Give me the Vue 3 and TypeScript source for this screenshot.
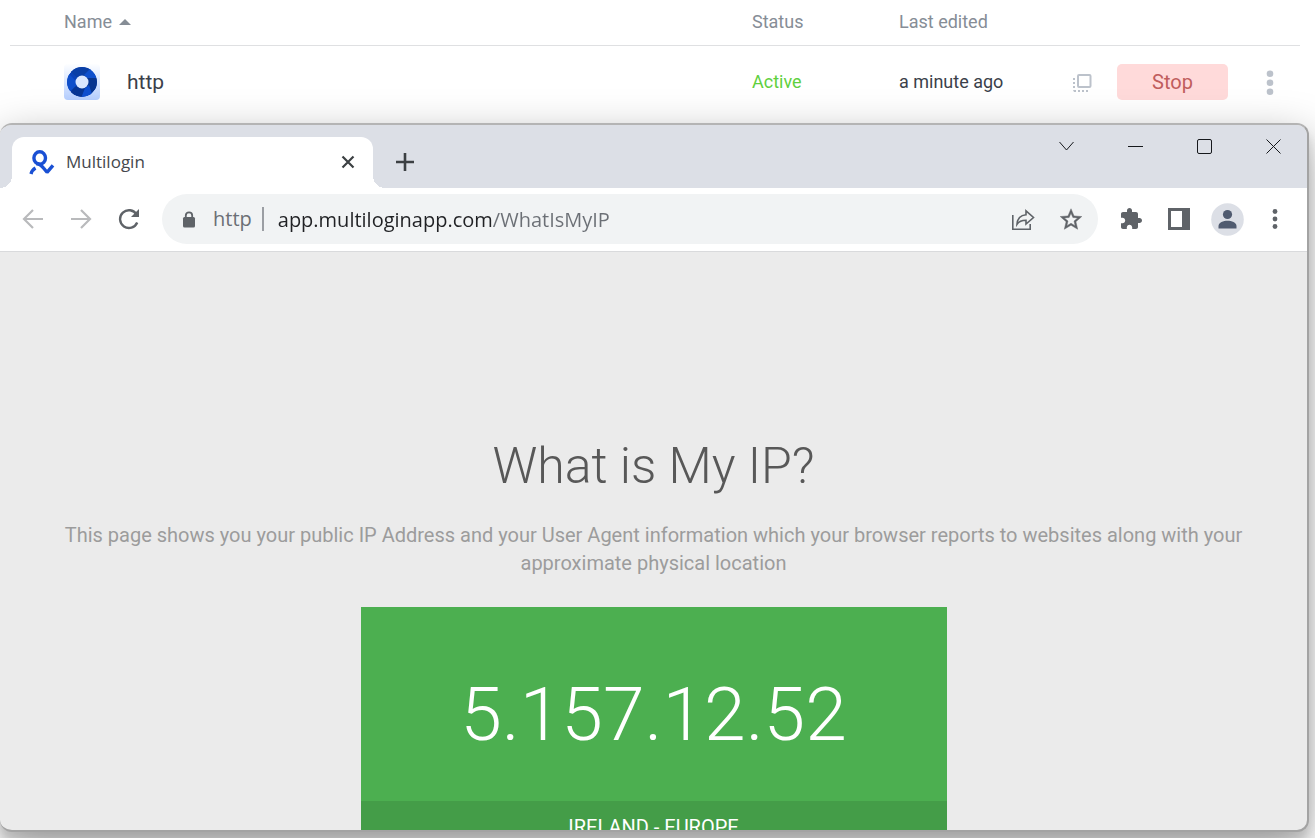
<script setup lang="ts">
import { ref } from 'vue'

interface Profile {
  name: string
  status: string
  edited: string
}

const profiles: Profile[] = [{ name: 'http', status: 'Active', edited: 'a minute ago' }]
const address = ref('app.multiloginapp.com/WhatIsMyIP')
</script>

<template>
  <div class="desktop">
    <table class="profiles">
      <thead>
        <tr>
          <th class="col-name" scope="col">
            <button class="sort" type="button">
              Name
              <svg width="12" height="6" viewBox="0 0 12 6" aria-hidden="true"><path d="M0 6 6 0l6 6z" fill="#868d96" /></svg>
            </button>
          </th>
          <th class="col-status" scope="col">Status</th>
          <th class="col-edited" scope="col">Last edited</th>
          <th class="col-actions" scope="col" aria-label="Actions"></th>
        </tr>
      </thead>
      <tbody>
        <tr v-for="p in profiles" :key="p.name">
          <td class="col-name">
            <div class="profile">
              <svg class="avatar" width="36" height="36" viewBox="0 0 36 36" aria-hidden="true">
                <defs>
                  <linearGradient id="tile" x1="0" y1="0" x2="0" y2="1">
                    <stop offset="0" stop-color="#fdfeff" />
                    <stop offset="1" stop-color="#b5ceff" />
                  </linearGradient>
                  <clipPath id="disc"><circle cx="18" cy="16" r="15" /></clipPath>
                </defs>
                <rect width="36" height="36" rx="4" fill="url(#tile)" />
                <g transform="translate(0 2)">
                  <g clip-path="url(#disc)">
                    <circle cx="18" cy="16" r="15" fill="#0b43b8" />
                    <path d="M18 16 5 4 13 0l15 2-7 8z" fill="#0a3fa6" />
                    <path d="M20 9 27 2l7 10-10 0z" fill="#0f50cd" />
                    <path d="M23 12h11v8l-8 9-5-8z" fill="#08358f" />
                    <path d="M25 19 28 28l-11 5 3-10z" fill="#0e4fd0" />
                    <path d="M21 22 17 32 6 27l5-7z" fill="#083695" />
                    <path d="M12 20 5 26 1 14 5 8l7 7z" fill="#0f4fca" />
                  </g>
                  <circle cx="18" cy="16" r="6.500" fill="#dce8ff" />
                </g>
              </svg>
              <span>{{ p.name }}</span>
            </div>
          </td>
          <td class="col-status active">{{ p.status }}</td>
          <td class="col-edited">{{ p.edited }}</td>
          <td class="col-actions">
            <div class="actions">
              <button class="icon-btn" type="button" aria-label="Bring to front">
                <svg width="20" height="20" viewBox="0 0 20 20" fill="#bcc2cb">
                  <rect x="6" y="3" width="12.500" height="12" rx="1" fill="none" stroke="#bcc2cb" stroke-width="2" />
                  <path d="M1 6h2v2H1zM1 10h2v2H1zM1 14h2v2H1zM1 18h3v2H2zM6 18h2v2H6zM10 18h2v2h-2zM14 18h2v2h-2z" />
                </svg>
              </button>
              <button class="stop" type="button">Stop</button>
              <button class="icon-btn" type="button" aria-label="More">
                <svg width="8" height="26" viewBox="0 0 8 26" fill="#bcc2cb">
                  <circle cx="4" cy="4.700" r="3.300" /><circle cx="4" cy="13.700" r="3.300" /><circle cx="4" cy="22.700" r="3.300" />
                </svg>
              </button>
            </div>
          </td>
        </tr>
      </tbody>
    </table>

    <section class="browser" aria-label="Multilogin browser">
      <div class="strip">
        <div class="tab">
          <svg class="favicon" width="26" height="26" viewBox="0 0 26 26" fill="none" stroke="#1a50d4" stroke-width="3.400" aria-hidden="true">
            <ellipse cx="10.700" cy="9" rx="5.800" ry="6.300" />
            <path d="M7 14.500q4 0 7.500 4.500l3.500 4.300 6-7" stroke-linejoin="bevel" />
            <path d="M2 25Q3 21 6.500 19" />
          </svg>
          <span class="title">Multilogin</span>
          <button class="close-tab" type="button" aria-label="Close tab">
            <svg width="14" height="14" viewBox="0 0 14 14" stroke="#3c4043" stroke-width="2.200"><path d="m1.500 1.500 11 11m0-11-11 11" /></svg>
          </button>
        </div>
        <button class="new-tab" type="button" aria-label="New tab">
          <svg width="18" height="18" viewBox="0 0 18 18" stroke="#3c4043" stroke-width="2.600"><path d="M9 0v18M0 9h18" /></svg>
        </button>
        <div class="controls">
          <button type="button" aria-label="Search tabs">
            <svg width="16" height="16" viewBox="0 0 16 16"><path d="m1.500 4 7 8 7-8" /></svg>
          </button>
          <button type="button" aria-label="Minimize">
            <svg width="16" height="16" viewBox="0 0 16 16"><path d="M1 8.500h15" /></svg>
          </button>
          <button type="button" aria-label="Maximize">
            <svg width="16" height="16" viewBox="0 0 16 16"><rect x="1.500" y="1.500" width="14" height="14" rx="1.500" /></svg>
          </button>
          <button type="button" aria-label="Close">
            <svg width="16" height="16" viewBox="0 0 16 16"><path d="m1.500 1.500 14 14m0-14-14 14" /></svg>
          </button>
        </div>
      </div>

      <div class="toolbar">
        <button class="tool" type="button" aria-label="Back">
          <svg width="22" height="20" viewBox="0 0 22 20" fill="none" stroke="#b9babc" stroke-width="2.200"><path d="M21 10H2.500M11 1 2 10l9 9" /></svg>
        </button>
        <button class="tool" type="button" aria-label="Forward">
          <svg width="22" height="20" viewBox="0 0 22 20" fill="none" stroke="#b9babc" stroke-width="2.200"><path d="M1 10h18.500M11 1l9 9-9 9" /></svg>
        </button>
        <button class="tool" type="button" aria-label="Reload">
          <svg width="22" height="22" viewBox="0 0 22 22" fill="none">
            <path d="M18.600 6.500A8.900 8.900 0 1 0 19.200 14.500" stroke="#5f6368" stroke-width="2.400" />
            <path d="M21 1v8h-8z" fill="#5f6368" />
          </svg>
        </button>
        <form class="omnibox" @submit.prevent>
          <svg class="lock" width="18" height="18" viewBox="0 0 18 18" aria-hidden="true">
            <rect x="3" y="7" width="12" height="10.500" rx="1.500" fill="#5f6368" />
            <path d="M5.800 8V5.500a3.200 3.200 0 0 1 6.400 0V8" fill="none" stroke="#5f6368" stroke-width="1.800" />
          </svg>
          <span class="chip">http</span>
          <input v-model="address" class="url" type="text" aria-label="Address" spellcheck="false" />
          <button class="tool" type="button" aria-label="Share">
            <svg width="24" height="24" viewBox="0 0 24 24" fill="none" stroke="#5f6368" stroke-width="1.600">
              <path d="M1.800 8v14.200h17.400V17" />
              <path d="M15 3.800 22.500 10.500 15 17v-3.800c-4.500 0-7 1-9 4 .4-5.500 3.500-9 9-9.500z" />
            </svg>
          </button>
          <button class="tool" type="button" aria-label="Bookmark">
            <svg width="26" height="26" viewBox="0 0 24 24" fill="#5f6368" stroke="#5f6368" stroke-width=".4"><path d="m22 9.740-7.190-.62L12 2.500 9.190 9.130 2 9.740l5.460 4.730L5.820 21.500 12 17.770l6.180 3.730-1.630-7.030L22 9.740zM12 15.900l-3.760 2.270 1-4.280-3.320-2.880 4.380-.38L12 6.600l1.710 4.040 4.380.38-3.320 2.880 1 4.280L12 15.900z" /></svg>
          </button>
        </form>
        <button class="tool" type="button" aria-label="Extensions">
          <svg width="24" height="24" viewBox="0 0 24 24" fill="#5f6368"><path d="M20.500 11H19V7c0-1.100-.9-2-2-2h-4V3.500C13 2.120 11.880 1 10.500 1S8 2.120 8 3.500V5H4c-1.100 0-1.990.9-1.990 2v3.800H3.500c1.490 0 2.700 1.210 2.700 2.700s-1.210 2.700-2.700 2.700H2V20c0 1.100.9 2 2 2h3.800v-1.500c0-1.490 1.210-2.700 2.700-2.700s2.700 1.210 2.700 2.700V22H17c1.100 0 2-.9 2-2v-4h1.500c1.380 0 2.500-1.120 2.500-2.500S21.880 11 20.500 11z" /></svg>
        </button>
        <button class="tool" type="button" aria-label="Side panel">
          <svg width="22" height="22" viewBox="0 0 22 22"><path d="M0 0h22v22H0zM3 3v16h11V3z" fill="#5f6368" fill-rule="evenodd" /></svg>
        </button>
        <button class="tool" type="button" aria-label="Profile">
          <svg width="34" height="34" viewBox="0 0 34 34">
            <circle cx="17.500" cy="17.500" r="16.300" fill="#dcdfe6" />
            <circle cx="17.500" cy="12.500" r="4.600" fill="#505b70" />
            <path d="M8.500 26.500V24c0-3.500 5-5.300 9-5.300s9 1.800 9 5.300v2.500z" fill="#505b70" />
          </svg>
        </button>
        <button class="tool" type="button" aria-label="Menu">
          <svg width="6" height="20" viewBox="0 0 6 20" fill="#5f6368"><circle cx="3" cy="2.500" r="2.400" /><circle cx="3" cy="10" r="2.400" /><circle cx="3" cy="17.500" r="2.400" /></svg>
        </button>
      </div>

      <main class="page">
        <h1>What is My IP?</h1>
        <p class="lead">
          This page shows you your public IP Address and your User Agent information which your browser reports to
          websites along with your approximate physical location
        </p>
        <div class="card">
          <div class="ip">5.157.12.52</div>
          <div class="place">IRELAND - EUROPE</div>
        </div>
      </main>
    </section>
  </div>
</template>

<style>
body {
  margin: 0;
}
</style>

<style scoped>
.desktop {
  box-sizing: border-box;
  height: 100vh;
  padding: 0 6px 6px 0;
  display: flex;
  flex-direction: column;
  overflow: hidden;
  background: #fff;
  font-family: Roboto, "Liberation Sans", sans-serif;
}

button {
  margin: 0;
  padding: 0;
  border: 0;
  background: none;
  font: inherit;
  color: inherit;
  display: inline-flex;
  align-items: center;
  justify-content: center;
  flex: none;
}

svg {
  display: block;
  flex: none;
}

.profiles {
  table-layout: fixed;
  border-collapse: separate;
  border-spacing: 0;
  width: calc(100% - 19px);
  margin: 0 0 5px 10px;
  font-size: 18px;
  line-height: 24px;
}

th,
td {
  padding: 0;
  text-align: left;
}

th {
  height: 43px;
  padding-bottom: 2px;
  border-bottom: 1px solid #dfe0e2;
  font-weight: 400;
  color: #868d96;
}

td {
  height: 72px;
  color: #3b3f4a;
}

.col-name {
  padding-left: 54px;
}

.col-status {
  width: 147px;
}

.col-edited {
  width: 173px;
}

.col-actions {
  width: 228px;
}

td.active {
  color: #5fd03e;
}

.sort {
  gap: 7px;
}

.profile {
  display: flex;
  align-items: center;
  gap: 27px;
  font-size: 21px;
}

.actions {
  display: flex;
  align-items: center;
}

.icon-btn {
  width: 20px;
}

.stop {
  width: 111px;
  height: 36px;
  margin: 0 32px 0 25px;
  border-radius: 5px;
  background: #ffdada;
  color: #c05d5d;
  font-size: 20px;
}

.browser {
  flex: 1;
  min-height: 0;
  display: flex;
  flex-direction: column;
  overflow: hidden;
  border: 2px solid #a3a3a3;
  border-top-color: #b4b4b4;
  border-left: 0;
  border-radius: 12px;
  background: #ebebeb;
  box-shadow: 0 14px 44px rgba(0, 0, 0, 0.34), 0 10px 10px rgba(0, 0, 0, 0.12);
}

.strip {
  display: flex;
  height: 63px;
  flex: none;
  background: #dcdfe6;
}

.tab {
  position: relative;
  box-sizing: border-box;
  display: flex;
  align-items: center;
  width: 361px;
  margin: 12px 0 0 12px;
  padding: 0 14px 2px 17px;
  border-radius: 12px 12px 0 0;
  background: #fff;
  color: #45484d;
  font-family: "Open Sans", "Noto Sans", sans-serif;
  font-size: 17px;
}

.tab::before,
.tab::after {
  content: "";
  position: absolute;
  bottom: 0;
  width: 12px;
  height: 12px;
}

.tab::before {
  right: 100%;
  background: radial-gradient(circle at 0 0, transparent 12px, #fff 12px);
}

.tab::after {
  left: 100%;
  background: radial-gradient(circle at 100% 0, transparent 12px, #fff 12px);
}

.title {
  flex: 1;
  margin-left: 11px;
}

.close-tab {
  width: 22px;
  height: 22px;
}

.new-tab {
  width: 36px;
  height: 36px;
  margin: 19px 0 0 14px;
}

.controls {
  display: flex;
  margin-left: auto;
}

.controls button {
  width: 69px;
  height: 42px;
}

.controls svg {
  overflow: visible;
  fill: none;
  stroke: #16181c;
  stroke-width: 1;
}

.toolbar {
  display: flex;
  align-items: center;
  flex: none;
  height: 62px;
  padding: 0 8px 1px 9px;
  border-bottom: 1px solid #d9dadc;
  background: #fff;
}

.tool {
  width: 48px;
  height: 48px;
}

.omnibox {
  flex: 1;
  min-width: 0;
  display: flex;
  align-items: center;
  height: 50px;
  margin: 0 9px;
  padding: 0 3px 0 18px;
  border-radius: 25px;
  background: #f1f3f4;
  font-family: "Open Sans", "Noto Sans", sans-serif;
  font-size: 20px;
}

.chip {
  margin-left: 15px;
  padding-right: 10px;
  border-right: 2px solid #9b9ea3;
  color: #6b6f75;
  line-height: 24px;
}

.url {
  flex: 1;
  min-width: 0;
  height: 32px;
  margin-left: 14px;
  padding: 0;
  border: 0;
  outline: 0;
  background: linear-gradient(90deg, #202124 214px, #6b6f75 214px);
  -webkit-background-clip: text;
  background-clip: text;
  color: transparent;
  caret-color: #202124;
  font: inherit;
}

.page {
  flex: 1;
  min-height: 0;
  overflow: hidden;
  padding: 0 60px;
  text-align: center;
}

h1 {
  margin: 184px 0 0;
  font-size: 50px;
  line-height: 60px;
  font-weight: 300;
  color: #585858;
}

.lead {
  margin: 25px 0 30px;
  font-size: 20px;
  line-height: 28px;
  font-weight: 400;
  color: #9c9c9c;
}

.card {
  width: 586px;
  max-width: 100%;
  margin: 0 auto;
  color: #fff;
}

.ip {
  padding: 60px 0 40px;
  background: #4caf50;
  font-size: 75px;
  line-height: 94px;
  font-weight: 300;
}

.place {
  padding: 14px 0;
  background: #449d48;
  font-size: 20px;
  line-height: 24px;
}
</style>
